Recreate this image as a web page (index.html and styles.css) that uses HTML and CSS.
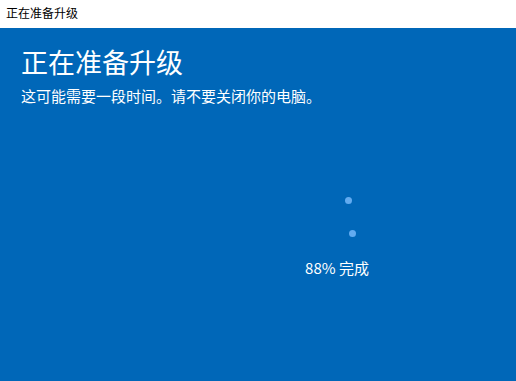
FILE: index.html
```html
<!DOCTYPE html>
<html lang="zh-CN">

<head>
    <meta charset="UTF-8">
    <meta name="viewport" content="width=device-width, initial-scale=1.0">
    <title>正在准备升级</title>
    <link rel="stylesheet" href="styles.css">
</head>

<body>
    <div class="titlebar">正在准备升级</div>
    <div class="main">
        <h1 class="heading">正在准备升级</h1>
        <p class="subtitle">这可能需要一段时间。请不要关闭你的电脑。</p>
        <div class="progress">
            <div class="spinner">
                <span class="dot dot-1"></span>
                <span class="dot dot-2"></span>
            </div>
            <div class="percent">88% 完成</div>
        </div>
    </div>
</body>

</html>
```

FILE: styles.css
```css
html,
body {
    height: 100%;
}

body {
    margin: 0;
    display: flex;
    flex-direction: column;
    font-family: "Noto Sans CJK SC", "Noto Sans", sans-serif;
    background-color: #0067b8;
}

.titlebar {
    height: 28px;
    line-height: 26px;
    padding-left: 6px;
    font-size: 12px;
    color: #000;
    background-color: #fff;
}

.main {
    flex: 1;
    padding: 0 21px;
    color: #fff;
}

.heading {
    margin: 14px 0 0;
    font-size: 27px;
    font-weight: normal;
    line-height: 40px;
}

.subtitle {
    margin: 4px 0 0;
    font-size: 15px;
    line-height: 20px;
}

.progress {
    display: flex;
    flex-direction: column;
    align-items: center;
    width: 100px;
    margin: 91px 0 0 266px;
}

.spinner {
    position: relative;
    width: 100px;
    height: 61px;
}

.dot {
    position: absolute;
    width: 7px;
    height: 7px;
    border-radius: 50%;
    background-color: #62abf0;
}

.dot-1 {
    left: 58px;
    top: 0;
}

.dot-2 {
    left: 62px;
    top: 33px;
}

.percent {
    font-size: 15px;
    line-height: 20px;
}
```
